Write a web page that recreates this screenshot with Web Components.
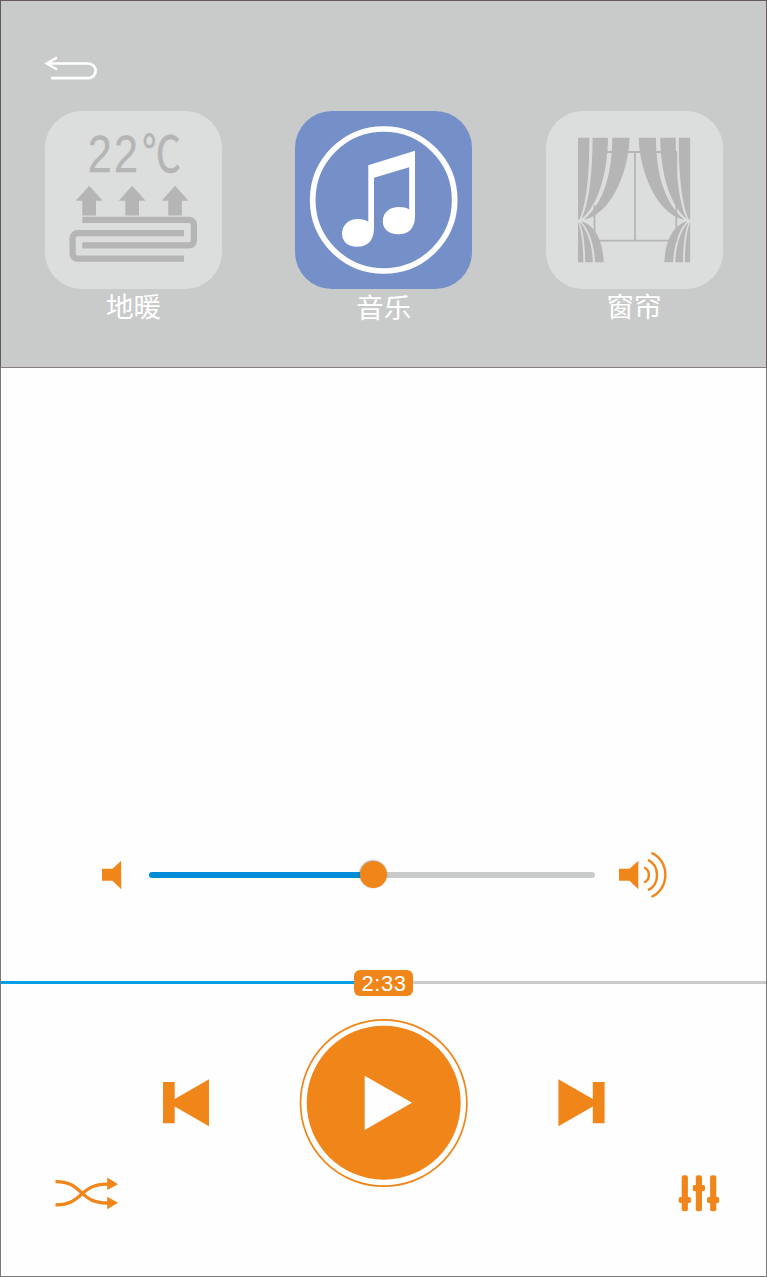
<!DOCTYPE html>
<html lang="zh">
<head>
<meta charset="utf-8">
<title>音乐</title>
<style>
html,body{margin:0;padding:0;background:#fefefe}
body{font-family:"Liberation Sans","Noto Sans CJK SC",sans-serif}
</style>
</head>
<body>
<music-screen></music-screen>
<script>
const define=(name,html,setup)=>{
  const t=document.createElement('template');t.innerHTML=html;
  customElements.define(name,class extends HTMLElement{
    constructor(){super();this.attachShadow({mode:'open'}).append(t.content.cloneNode(true));}
    connectedCallback(){if(setup)setup(this,this.shadowRoot);}
  });
};

/* viewBox, markup */
const ICONS={
back:['44 54 54 28','<path d="M48 63.500H88.300a7.350 7.350 0 0 1 0 14.700H51" fill="none" stroke="#fff" stroke-width="2.700"/><path d="M57 57.400 46.600 63.500 57 69.600" fill="none" stroke="#fff" stroke-width="2.300"/>'],
heating:['45 111 177 178',`<g fill="#b5b5b5" stroke="#b5b5b5">
<text font-family="Liberation Sans,sans-serif" font-size="52" stroke-width=".3" transform="translate(87.700 172) scale(.83 1)" letter-spacing="2.700">22</text>
<text font-family="Noto Sans CJK SC,sans-serif" font-size="50" stroke-width=".6" transform="translate(142 172) scale(.78 1)">℃</text>
<path stroke="none" d="M89.300 185.700 102.700 200.700H96V215.500H82.300V200.700H75.700ZM132.200 185.700 145.600 200.700H139V215.500H125.300V200.700H118.700ZM175 185.700 188.500 200.700H181.900V215.500H168.200V200.700H161.600Z"/></g>
<path d="M82.300 219.800H189a4.900 4.900 0 0 1 4.900 4.900V240.500a4.900 4.900 0 0 1-4.900 4.900H82.300M184 233.200H77.500a4.900 4.900 0 0 0-4.900 4.900V253.700a4.900 4.900 0 0 0 4.900 4.900H184" fill="none" stroke="#b5b5b5" stroke-width="6.300"/>`],
music:['295 111 177 178',`<circle cx="383.700" cy="200" r="71" fill="none" stroke="#fff" stroke-width="5.700"/>
<path fill="#fff" d="M368.300 165.200 415 150.800V216C415 228 409 234.300 398 234.300C389 234.300 382.800 229 382.800 221.500C382.800 212 390 207 399 207C403 207 406.500 207.700 409.200 209.500V167.300L374 177.800V228C374 240 368 246.800 357 246.800C348 246.800 342 241.500 342 233.800C342 225 349 219 358 219C362 219 365.500 219.800 368.300 221.700Z"/>`],
curtain:['546 111 177 178',`<path d="M594 152H677.200M676.300 152V241M677 240.700H594.500V205M635 152V241" fill="none" stroke="#b5b5b5" stroke-width="1.800"/>
<g id="l"></g>`],
mute:['102 860 20 30','<path fill="#f08619" d="M102 868.800H112.500L121.200 860.800V889.200L112.500 880.800H102Z"/>'],
loud:['619 851 49 48','<path fill="#f08619" d="M619 868.800H629.500L638.300 860.800V889.200L629.500 880.800H619Z"/><g fill="none" stroke="#f08619" stroke-width="2.400"><path d="M644 867.500C650.500 870 650.500 880 644 882.500M648 859.800C660 865.500 660 884.500 648 890.200M651.500 852.800C670 861 670 888.500 651.500 897"/></g>'],
prev:['163 1079 46 48','<path fill="#f08619" d="M163 1082H174.700V1099L209 1079.200V1126.300L174.700 1106.500V1123.300H163Z"/>'],
next:['558 1079 47 48','<path fill="#f08619" d="M604.600 1082H592.800V1099L558.400 1079.200V1126.300L592.800 1106.500V1123.300H604.600Z"/>'],
play:['299 1018 170 170','<circle cx="383.700" cy="1103" r="83.200" fill="#fefefe" stroke="#f08619" stroke-width="1.700"/><circle cx="383.700" cy="1102.700" r="77" fill="#f08619"/><path fill="#fefefe" d="M364.700 1075.700 412 1102.800 364.700 1130Z"/>'],
shuffle:['55 1177 64 34','<path d="M55.500 1181.600C84 1181.200 78 1203.500 108 1203M55.500 1204.800C84 1205.200 78 1183.800 108 1184.200" fill="none" stroke="#f08619" stroke-width="3.300"/><path fill="#f08619" d="M107.200 1177.600 118 1184.200 107.200 1190ZM107.200 1196.800 118 1202.800 107.200 1209.200Z"/>'],
mixer:['678 1175 42 37','<g fill="#f08619"><rect x="681.700" y="1175.300" width="6.200" height="36" rx="2"/><rect x="695.800" y="1175.300" width="6.200" height="36" rx="2"/><rect x="710.100" y="1175.300" width="6.200" height="36" rx="2"/><rect x="678.700" y="1196.900" width="12.200" height="6.200" rx="1.800"/><rect x="692.800" y="1185" width="12.200" height="6.200" rx="1.800"/><rect x="707" y="1196.900" width="12.200" height="6.200" rx="1.800"/></g>']
};
const half=`<path d="M578 137.800H589.300C589.500 165 588 200 579.500 219.500H578ZM592.500 137.800H608C607.500 175 598 205 581.500 219C589 203 592.500 175 592.500 137.800ZM612.300 137.800H629.500C629 170 612 214 584 219.800C601 205 612 180 612.300 137.800ZM578 222C581.500 230 583.300 245 583.300 262.200H578ZM579.300 222C587 229 592.500 245 592.800 262.200H585.200C585 244 583.500 231 579.300 222ZM581 221.500C594 224 603 240 603.800 262.200H595.200C594 244 589 229 581 221.500Z"/>`;
ICONS.curtain[1]=ICONS.curtain[1].replace('<g id="l"></g>',`<g fill="#b5b5b5">${half}<g transform="translate(1268.200 0) scale(-1 1)">${half}</g></g>`);

define('line-icon','<style>:host{display:block;flex:none}svg{display:block}</style>',(el,root)=>{
  const [box,body]=ICONS[el.getAttribute('name')],[,,w,h]=box.split(' ');
  root.innerHTML+=`<svg width="${w}" height="${h}" viewBox="${box}">${body}</svg>`;
});
define('room-tile',`<style>
:host{display:flex;flex-direction:column;align-items:center;width:177px;--tile:#dcdedd}
:host([active]){--tile:#7590c9}
.tile{width:177px;height:178px;border-radius:37px;background:var(--tile)}
.label{font:400 27.500px/33px "Noto Sans CJK SC",sans-serif;color:#fff;white-space:nowrap}
:host([active]) .label{padding-top:1px}
</style><div class="tile"><slot name="icon"></slot></div><div class="label"><slot></slot></div>`);
define('volume-slider',`<style>
:host{display:block;width:446px;height:6px;border-radius:3px;position:relative;background:linear-gradient(90deg,#008cd6 50%,#c9caca 50%)}
i{position:absolute;left:211px;top:-11px;width:27px;height:27px;border-radius:50%;background:#f08619;box-shadow:-.5px -.5px 2px #666a}
</style><i></i>`);
define('track-progress',`<style>
:host{display:flex;align-items:center;height:27px}
.bar{height:3.500px;flex:1;background:#c9caca}.done{background:#00a0e9;flex:none;width:353px}
.time{width:59px;height:26px;border-radius:6px;background:#f08619;color:#fff;font:22px/28px "Liberation Sans",sans-serif;letter-spacing:.6px;text-align:center;text-indent:1px}
</style><div class="bar done"></div><div class="time"><slot></slot></div><div class="bar"></div>`);
define('music-screen',`<style>
:host{display:flex;flex-direction:column;box-sizing:border-box;width:767px;height:1277px;border:1px solid #7b7879;background:#fefefe}
header{box-sizing:border-box;height:368px;margin:-1px -1px 0;border:1px solid #655a5d;border-bottom-color:#857d80;background:#c9caca;padding:53px 43px 0 43px}
.tiles{display:flex;justify-content:space-between;margin-top:29px;padding:0 .5px 0 1px}
.volume{display:flex;align-items:center;height:48px;margin:483px 98px 0 101px}
volume-slider{margin:0 24px 0 27px}
track-progress{margin-top:70px}
.transport{display:flex;align-items:center;margin:22px 0 0 162px;column-gap:90px}
.transport line-icon:last-child{margin-left:-1px}
.extras{display:flex;justify-content:space-between;align-items:center;margin:-13px 46px 0 54px}
</style>
<header><line-icon name="back"></line-icon>
<div class="tiles">
<room-tile><line-icon slot="icon" name="heating"></line-icon>地暖</room-tile>
<room-tile active><line-icon slot="icon" name="music"></line-icon>音乐</room-tile>
<room-tile><line-icon slot="icon" name="curtain"></line-icon>窗帘</room-tile>
</div></header>
<div class="volume"><line-icon name="mute"></line-icon><volume-slider></volume-slider><line-icon name="loud"></line-icon></div>
<track-progress>2:33</track-progress>
<div class="transport"><line-icon name="prev"></line-icon><line-icon name="play"></line-icon><line-icon name="next"></line-icon></div>
<div class="extras"><line-icon name="shuffle"></line-icon><line-icon name="mixer"></line-icon></div>`);
</script>
</body>
</html>
